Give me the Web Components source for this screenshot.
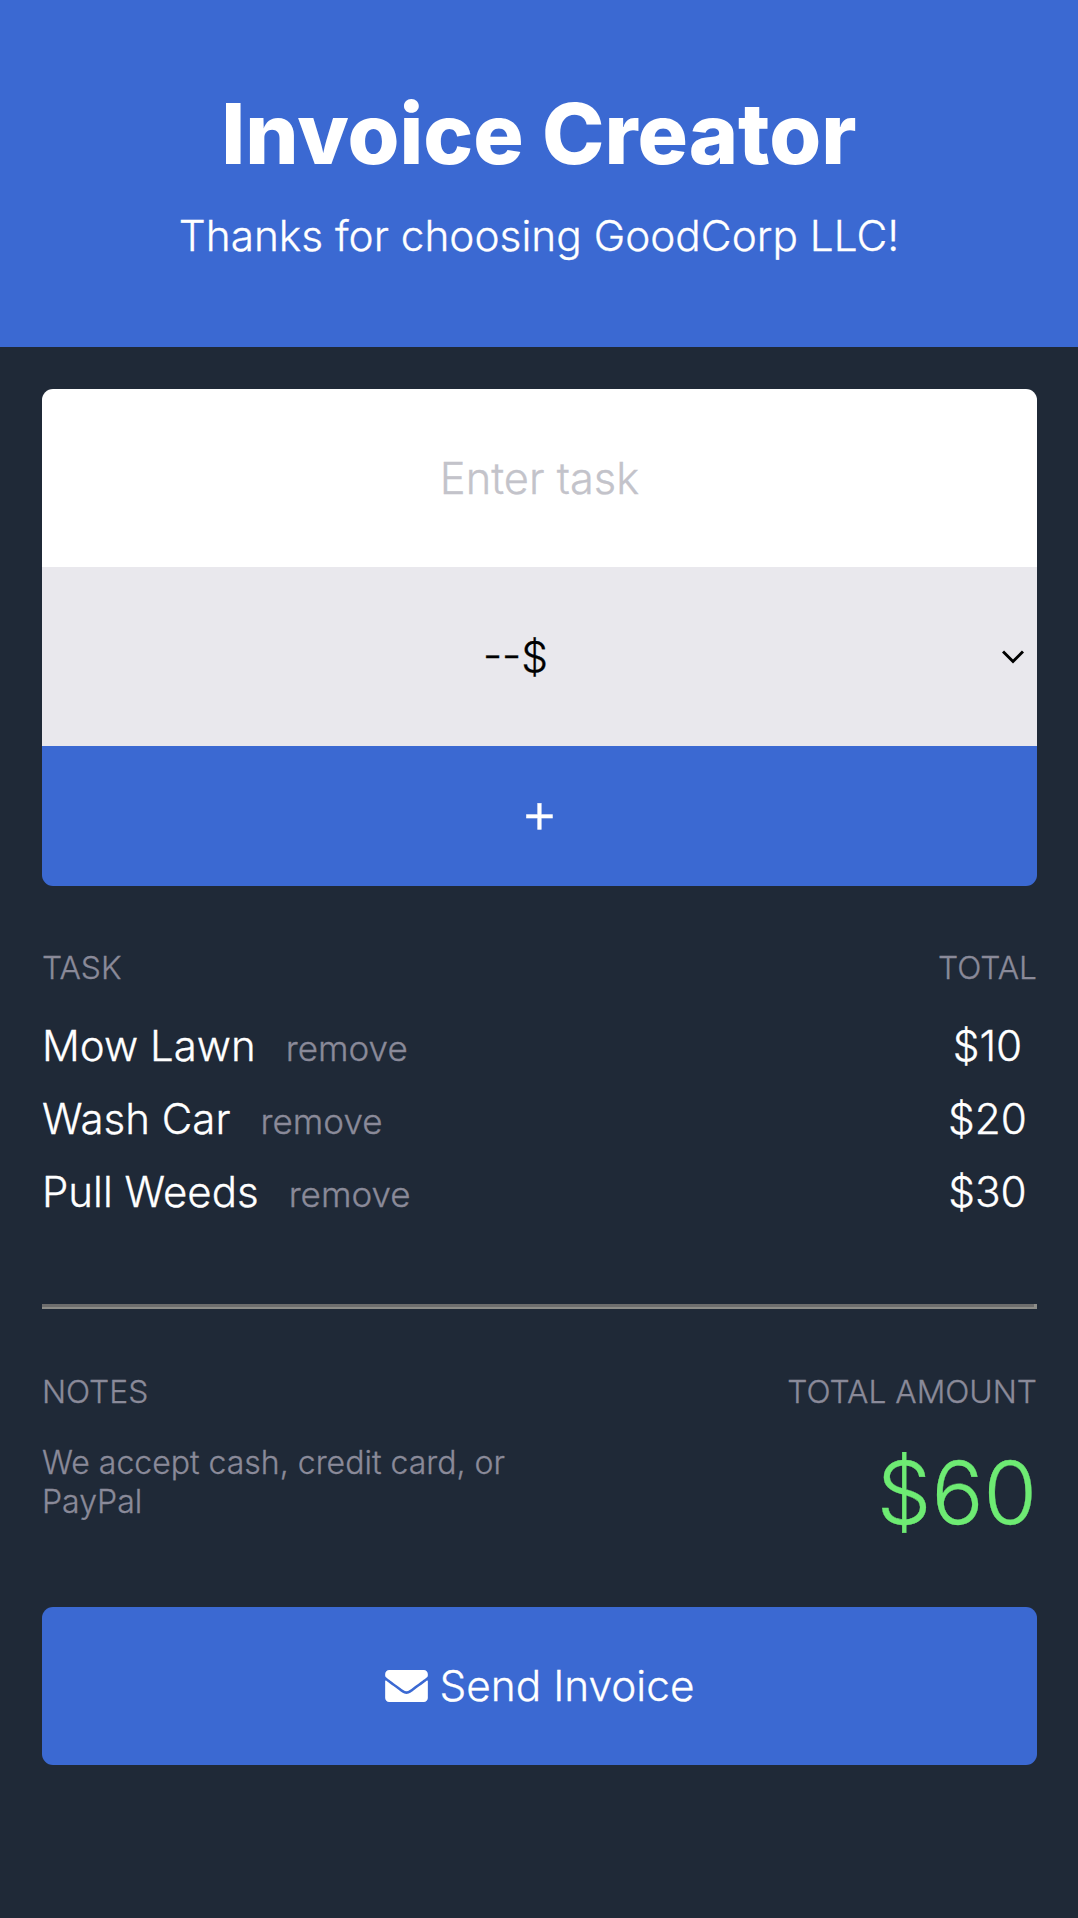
<!DOCTYPE html>
<html lang="en">
<head>
<meta charset="utf-8">
<title>Invoice Creator</title>
<style>
  html, body { margin: 0; background: #1f2937; }
  body { font-family: Inter, "Liberation Sans", sans-serif; color: #fff; min-height: 1918px; -webkit-text-stroke: 0.3px; }
</style>
</head>
<body>
<invoice-header title="Invoice Creator" subtitle="Thanks for choosing GoodCorp LLC!"></invoice-header>
<invoice-main>
  <task-form></task-form>
  <invoice-columns left="TASK" right="TOTAL">
    <task-row name="Mow Lawn" amount="$10"></task-row>
    <task-row name="Wash Car" amount="$20"></task-row>
    <task-row name="Pull Weeds" amount="$30"></task-row>
  </invoice-columns>
  <invoice-divider></invoice-divider>
  <invoice-summary notes="We accept cash, credit card, or PayPal" total="$60"></invoice-summary>
  <send-button>Send Invoice</send-button>
</invoice-main>
<script>
function shadow(el, html) {
  el.attachShadow({ mode: "open" }).innerHTML = html;
}

class InvoiceHeader extends HTMLElement {
  connectedCallback() {
    shadow(this, `
<style>
  :host { display: block; background: #3b69d2; height: 347px; text-align: center; box-sizing: border-box; padding-top: 84px; }
  h1 { margin: 0; font-size: 84px; font-weight: 800; line-height: 100px; -webkit-text-stroke: 0; }
  p { margin: 27px 0 0; font-size: 42.35px; font-weight: 300; line-height: 50px; }
</style>
<h1>${this.getAttribute("title")}</h1>
<p>${this.getAttribute("subtitle")}</p>`);
  }
}

class InvoiceMain extends HTMLElement {
  connectedCallback() {
    shadow(this, `
<style>
  :host { display: flex; flex-direction: column; padding: 42px 41px 0 42px; }
</style>
<slot></slot>`);
  }
}

class TaskForm extends HTMLElement {
  connectedCallback() {
    shadow(this, `
<style>
  :host { display: flex; flex-direction: column; border-radius: 11px; overflow: hidden; text-align: center; font-weight: 300; }
  .row { display: flex; align-items: center; justify-content: center; position: relative; box-sizing: border-box; }
  .task { height: 178px; background: #fff; color: #c3c3ca; font-size: 43.4px; }
  .price { height: 179px; background: #e9e8ed; color: #000; font-size: 42.35px; padding-right: 48px; }
  .add { height: 140px; background: #3b69d2; color: #fff; font-size: 58px; line-height: 1; padding-bottom: 8px; }
  .price svg { position: absolute; right: 13px; top: 83px; }
</style>
<div class="row task">Enter task</div>
<div class="row price">--$
  <svg width="22" height="14" viewBox="0 0 22 14" fill="none" stroke="#000" stroke-width="3"><path d="M1 1.500l10 10 10-10"/></svg>
</div>
<div class="row add">+</div>`);
  }
}

class InvoiceColumns extends HTMLElement {
  connectedCallback() {
    shadow(this, `
<style>
  :host { display: block; margin-top: 64px; }
  .head { display: flex; justify-content: space-between; font-size: 31.76px; font-weight: 300; line-height: 36px; color: #8a8a99; }
  .rows { display: flex; flex-direction: column; gap: 18.800px; margin-top: 34px; }
</style>
<div class="head"><span>${this.getAttribute("left")}</span><span>${this.getAttribute("right")}</span></div>
<div class="rows"><slot></slot></div>`);
  }
}

class TaskRow extends HTMLElement {
  connectedCallback() {
    shadow(this, `
<style>
  :host { display: flex; align-items: baseline; font-size: 42px; font-weight: 300; line-height: 52px; }
  .remove { margin-left: 30px; font-size: 35px; color: #8a8a99; }
  .amount { margin-left: auto; width: 99px; text-align: center; font-size: 42.35px; }
</style>
<span>${this.getAttribute("name")}</span>
<span class="remove">remove</span>
<span class="amount">${this.getAttribute("amount")}</span>`);
  }
}

class InvoiceDivider extends HTMLElement {
  connectedCallback() {
    shadow(this, `
<style>
  :host { display: block; box-sizing: border-box; margin-top: 84px; height: 5px; background: #6d6d6d; border-right: 3px solid #8c8c88; border-bottom: 2px solid #8c8c88; }
</style>`);
  }
}

class InvoiceSummary extends HTMLElement {
  connectedCallback() {
    shadow(this, `
<style>
  :host { display: flex; justify-content: space-between; margin-top: 65px; font-weight: 300; }
  .label { font-size: 31.76px; line-height: 36px; color: #8a8a99; }
  .notes { width: 500px; margin-top: 33px; font-size: 32px; line-height: 39px; color: #8a8a99; }
  .right { text-align: right; }
  .total { margin-top: 30px; font-size: 86.6px; line-height: 106px; color: #6eeb73; }
</style>
<div>
  <div class="label">NOTES</div>
  <div class="notes">${this.getAttribute("notes")}</div>
</div>
<div class="right">
  <div class="label">TOTAL AMOUNT</div>
  <div class="total">${this.getAttribute("total")}</div>
</div>`);
  }
}

class SendButton extends HTMLElement {
  connectedCallback() {
    shadow(this, `
<style>
  :host { display: flex; align-items: center; justify-content: center; gap: 12px; margin-top: 61px; height: 158px; background: #3b69d2; border-radius: 11px; font-size: 42.35px; font-weight: 300; }
  svg { width: 43px; height: 32px; }
</style>
<svg viewBox="0 64 512 384"><path fill="#fff" d="M502.300 190.800c3.900-3.100 9.700-.2 9.700 4.700V400c0 26.500-21.500 48-48 48H48c-26.500 0-48-21.500-48-48V195.600c0-5 5.700-7.800 9.700-4.700 22.400 17.400 52.100 39.500 154.100 113.600 21.100 15.400 56.700 47.800 92.200 47.600 35.700.3 72-32.800 92.300-47.600 102-74.100 131.600-96.300 154-113.700zM256 320c23.200.4 56.600-29.200 73.400-41.400 132.700-96.300 142.800-104.700 173.400-128.700 5.800-4.500 9.200-11.500 9.200-18.900v-19c0-26.500-21.500-48-48-48H48C21.500 64 0 85.500 0 112v19c0 7.400 3.400 14.300 9.200 18.900 30.600 23.900 40.700 32.400 173.400 128.700 16.800 12.200 50.200 41.800 73.400 41.400z"/></svg>
<slot></slot>`);
  }
}

customElements.define("invoice-header", InvoiceHeader);
customElements.define("invoice-main", InvoiceMain);
customElements.define("task-form", TaskForm);
customElements.define("invoice-columns", InvoiceColumns);
customElements.define("task-row", TaskRow);
customElements.define("invoice-divider", InvoiceDivider);
customElements.define("invoice-summary", InvoiceSummary);
customElements.define("send-button", SendButton);
</script>
</body>
</html>
